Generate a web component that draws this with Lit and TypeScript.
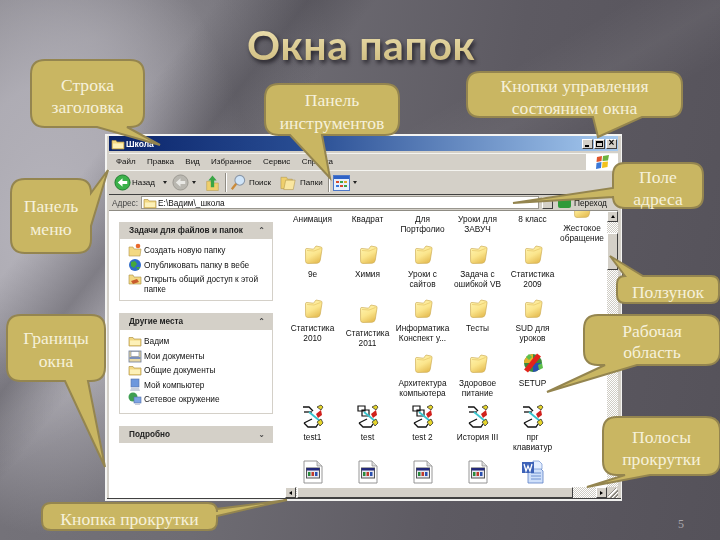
import { LitElement, html, css, svg, nothing } from "lit";
import { customElement } from "lit/decorators.js";

type Tail = { side: "top" | "bottom" | "left" | "right"; a: number; b: number; tx: number; ty: number };
type Callout = { x: number; y: number; w: number; h: number; r: number; lines: string[]; tail: Tail; lh: number };

const callouts: Callout[] = [
  { x: 31, y: 60, w: 113, h: 67, r: 14, lh: 22, lines: ["Строка", "заголовка"], tail: { side: "bottom", a: 97, b: 127, tx: 160, ty: 145 } },
  { x: 265, y: 84, w: 134, h: 51, r: 14, lh: 23, lines: ["Панель", "инструментов"], tail: { side: "bottom", a: 290, b: 322, tx: 330, ty: 178 } },
  { x: 467, y: 72, w: 215, h: 45, r: 13, lh: 22, lines: ["Кнопки управления", "состоянием окна"], tail: { side: "bottom", a: 593, b: 642, tx: 598, ty: 137 } },
  { x: 613, y: 163, w: 90, h: 45, r: 12, lh: 22, lines: ["Поле", "адреса"], tail: { side: "left", a: 188, b: 197, tx: 513, ty: 203 } },
  { x: 617, y: 276, w: 102, h: 27, r: 8, lh: 22, lines: ["Ползунок"], tail: { side: "top", a: 625, b: 643, tx: 610, ty: 256 } },
  { x: 584, y: 315, w: 136, h: 50, r: 14, lh: 21, lines: ["Рабочая", "область"], tail: { side: "bottom", a: 605, b: 637, tx: 547, ty: 392 } },
  { x: 603, y: 417, w: 117, h: 58, r: 14, lh: 22, lines: ["Полосы", "прокрутки"], tail: { side: "bottom", a: 625, b: 650, tx: 587, ty: 487 } },
  { x: 11, y: 179, w: 80, h: 74, r: 14, lh: 23, lines: ["Панель", "меню"], tail: { side: "right", a: 193, b: 226, tx: 108, ty: 170 } },
  { x: 7, y: 315, w: 98, h: 66, r: 14, lh: 23, lines: ["Границы", "окна"], tail: { side: "bottom", a: 65, b: 88, tx: 105, ty: 467 } },
  { x: 42, y: 503, w: 175, h: 27, r: 9, lh: 22, lines: ["Кнопка прокрутки"], tail: { side: "right", a: 509, b: 516, tx: 287, ty: 500 } },
];

function calloutPath(c: Callout, ox: number, oy: number) {
  const l = c.x - ox, t = c.y - oy, r = l + c.w, b = t + c.h, q = c.r;
  const tx = c.tail.tx - ox, ty = c.tail.ty - oy;
  const A = c.tail.a, B = c.tail.b;
  let d = `M${l + q} ${t}`;
  if (c.tail.side === "top") d += `L${A - ox} ${t}L${tx} ${ty}L${B - ox} ${t}`;
  d += `L${r - q} ${t}Q${r} ${t} ${r} ${t + q}`;
  if (c.tail.side === "right") d += `L${r} ${A - oy}L${tx} ${ty}L${r} ${B - oy}`;
  d += `L${r} ${b - q}Q${r} ${b} ${r - q} ${b}`;
  if (c.tail.side === "bottom") d += `L${B - ox} ${b}L${tx} ${ty}L${A - ox} ${b}`;
  d += `L${l + q} ${b}Q${l} ${b} ${l} ${b - q}`;
  if (c.tail.side === "left") d += `L${l} ${B - oy}L${tx} ${ty}L${l} ${A - oy}`;
  d += `L${l} ${t + q}Q${l} ${t} ${l + q} ${t}Z`;
  return d;
}

const folder = (w = 20, h = 20) => html`<svg width=${w} height=${h} viewBox="0 0 20 20">
  <defs><linearGradient id="fg" x1="0" y1="0" x2=".5" y2="1"><stop offset="0" stop-color="#fff6b4"/><stop offset=".6" stop-color="#fbe58c"/><stop offset="1" stop-color="#e8c25a"/></linearGradient></defs>
  <path d="M2.500 5.500Q2.500 4.500 4 4.500L10.500 5.200 13 2 18 3Q19.300 3.300 19 5L17.300 16Q17 19 14 19.300L5 19.500Q2.800 19.500 2.600 17.500Z" fill="url(#fg)" stroke="#cfae56" stroke-width=".7"/>
  <path d="M4 6.500 11 7 17.500 4.500" fill="none" stroke="#e6c566" stroke-width=".7"/>
</svg>`;

const smallFolder = () => html`<svg width="14" height="14" viewBox="0 0 14 14">
  <path d="M1 3.500 5 3.500 6 5 13 5 13 12 1 12Z" fill="#f3d983" stroke="#b2964a" stroke-width=".7"/>
  <path d="M2 6.500 12 6.500 12 11 2 11Z" fill="#fdf1b8"/>
</svg>`;

const appIcon = (boxes = false) => html`<svg width="24" height="26" viewBox="0 0 24 26">
  ${boxes
    ? svg`<path d="M2 2H9V7H2ZM6 6H13V12H6Z" fill="none" stroke="#111" stroke-width="1.200"/>`
    : svg`<path d="M2 3H8L12 7" fill="none" stroke="#111" stroke-width="1.300"/><path d="M3 8H11" stroke="#111" stroke-width="1.300"/>`}
  <path d="M8 8 19 17" stroke="#39c6cf" stroke-width="1.800"/>
  <path d="M3 19 11 15M3 19 7 23 15 23 17 20" fill="none" stroke="#111" stroke-width="1.300"/>
  <path d="M16 3 20 1 22 3 20 6Z" fill="#e6d52a" stroke="#222" stroke-width=".7"/>
  <path d="M15 10 20 6 21 11 17 14Z" fill="#d0201c"/>
  <path d="M16 18 20 15 22 19 19 22Z" fill="#e6d52a" stroke="#222" stroke-width=".7"/>
</svg>`;

const htmlIcon = () => html`<svg width="20" height="24" viewBox="0 0 20 24">
  <path d="M1 1H14L19 6V23H1Z" fill="#fff" stroke="#8a8a8a" stroke-width=".9"/>
  <path d="M14 1V6H19" fill="#dcdcdc" stroke="#8a8a8a" stroke-width=".7"/>
  <rect x="3.500" y="8" width="13" height="10" fill="#e8e8f0" stroke="#555"/>
  <rect x="3.500" y="8" width="13" height="2.500" fill="#23297a"/>
  <rect x="5" y="12" width="2.500" height="4" fill="#2a8a3a"/>
  <rect x="8.500" y="12" width="2.500" height="4" fill="#c0392b"/>
  <rect x="12" y="12" width="2.500" height="4" fill="#2a50b0"/>
</svg>`;

const wordIcon = () => html`<svg width="24" height="24" viewBox="0 0 24 24">
  <path d="M7 7H18L22 11V23H7Z" fill="#cfe0fa" stroke="#5a7fc4" stroke-width=".8"/>
  <path d="M10 13H20M10 16H20M10 19H20" stroke="#6f90d0"/>
  <path d="M12 1H18L21 4V9H12Z" fill="#e4eeff" stroke="#6f90d0" stroke-width=".7"/>
  <rect x="1" y="2" width="12" height="11" fill="#3d62b8"/>
  <path d="M3 4 5 11 7 6 9 11 11 4" fill="none" stroke="#fff" stroke-width="1.300"/>
</svg>`;

const setupIcon = () => html`<svg width="24" height="22" viewBox="0 0 24 22">
  <circle cx="12" cy="11" r="9" fill="#3c8a3a"/>
  <path d="M3 11A9 9 0 0 1 12 2L12 11Z" fill="#e2b22a"/>
  <path d="M21 11A9 9 0 0 1 12 20L12 11Z" fill="#2a4fb0"/>
  <path d="M5 5 8 2 11 5 8 8ZM17 13 21 11 22 16 18 18Z" fill="#5ec04c"/>
  <path d="M5 19 18 3" stroke="#e3231b" stroke-width="5"/>
</svg>`;

const arrowIcon = (fill: string, stroke: string, arrow: string) => html`<svg width="17" height="17" viewBox="0 0 18 18">
  <circle cx="9" cy="9" r="8" fill=${fill} stroke=${stroke}/>
  <path d="M4 9 9 4.500V7.500H14V10.500H9V13.500Z" fill=${arrow}/>
</svg>`;

const xpFlag = () => html`<svg width="16" height="16" viewBox="0 0 16 16">
  <path d="M2 3 7 2 6.500 7 1.500 8Z" fill="#e0542a"/>
  <path d="M8 2 14 1 13 6.500 7.500 7Z" fill="#6cb33f"/>
  <path d="M1.500 9 6.500 8 6 14 1 15Z" fill="#3a78d8"/>
  <path d="M7.500 8 13 7.500 12.500 13 7 14Z" fill="#f2c21d"/>
</svg>`;

const taskIcon = (k: string) => {
  if (k === "new") return html`<svg width="14" height="14" viewBox="0 0 14 14"><path d="M1 4 5 4 6 6 13 6 12 13 1 13Z" fill="#f3d983" stroke="#b2964a" stroke-width=".6"/><circle cx="10" cy="3" r="2.300" fill="#e8692c"/></svg>`;
  if (k === "web") return html`<svg width="14" height="14" viewBox="0 0 14 14"><circle cx="7" cy="7" r="6" fill="#2f6bc9"/><path d="M3 4 7 3 9 6 6 10 3 8ZM8 9H12L10 12Z" fill="#45a83a"/></svg>`;
  if (k === "share") return html`<svg width="14" height="14" viewBox="0 0 14 14"><path d="M1 3 5 3 6 5 13 5 13 12 1 12Z" fill="#f3d983" stroke="#a98f44" stroke-width=".6"/><path d="M3 9 9 7 11 10 5 12Z" fill="#c85a2c"/></svg>`;
  if (k === "docs") return html`<svg width="14" height="14" viewBox="0 0 14 14"><rect x="1" y="2" width="12" height="11" fill="#e9d9a4" stroke="#6d7c9a" stroke-width=".8"/><rect x="3" y="2.500" width="8" height="5" fill="#fff" stroke="#6d7c9a" stroke-width=".6"/><rect x="1.500" y="8" width="11" height="2" fill="#7a8fbd"/></svg>`;
  if (k === "pc") return html`<svg width="14" height="14" viewBox="0 0 14 14"><rect x="3" y="1" width="8" height="8" fill="#6d97dd" stroke="#5670a8" stroke-width=".6"/><path d="M3 10H11L12 13H2Z" fill="#c9cfdc"/></svg>`;
  if (k === "net") return html`<svg width="14" height="14" viewBox="0 0 14 14"><circle cx="5" cy="5" r="4.500" fill="#3f9f52"/><rect x="6" y="5" width="7" height="6" fill="#7da4e4" stroke="#5670a8" stroke-width=".6"/><rect x="7" y="11" width="5" height="2" fill="#c9cfdc"/></svg>`;
  return smallFolder();
};

type Item = { icon?: "folder" | "app" | "appb" | "html" | "word" | "setup"; label?: string[]; cls?: string };
const items: Item[] = [
  { icon: "folder", label: ["Анимация"] }, { icon: "folder", label: ["Квадрат"] }, { icon: "folder", label: ["Для", "Портфолио"] },
  { icon: "folder", label: ["Уроки для", "ЗАВУЧ"] }, { icon: "folder", label: ["8 класс"] }, { icon: "folder", label: ["Жестокое", "обращение"], cls: "low" },
  { icon: "folder", label: ["9е"] }, { icon: "folder", label: ["Химия"] }, { icon: "folder", label: ["Уроки с", "сайтов"] },
  { icon: "folder", label: ["Задача с", "ошибкой VB"] }, { icon: "folder", label: ["Статистика", "2009"] }, {},
  { icon: "folder", label: ["Статистика", "2010"] }, { icon: "folder", label: ["Статистика", "2011"], cls: "shift" }, { icon: "folder", label: ["Информатика", "Конспект у..."] },
  { icon: "folder", label: ["Тесты"] }, { icon: "folder", label: ["SUD для", "уроков"] }, {},
  {}, {}, { icon: "folder", label: ["Архитектура", "компьютера"] },
  { icon: "folder", label: ["Здоровое", "питание"] }, { icon: "setup", label: ["SETUP"] }, {},
  { icon: "app", label: ["test1"] }, { icon: "appb", label: ["test"] }, { icon: "appb", label: ["test 2"] },
  { icon: "app", label: ["История III"] }, { icon: "app", label: ["прг", "клавиатур"] }, {},
  { icon: "html" }, { icon: "html" }, { icon: "html" }, { icon: "html" }, { icon: "word" }, {},
];

const renderIcon = (k?: string) => {
  switch (k) {
    case "folder": return folder();
    case "app": return appIcon();
    case "appb": return appIcon(true);
    case "html": return htmlIcon();
    case "word": return wordIcon();
    case "setup": return setupIcon();
  }
  return nothing;
};

const panels = [
  { title: "Задачи для файлов и папок", up: true, rows: [["new", "Создать новую папку"], ["web", "Опубликовать папку в вебе"], ["share", "Открыть общий доступ к этой папке"]], h: 62 },
  { title: "Другие места", up: true, rows: [["folder", "Вадим"], ["docs", "Мои документы"], ["folder", "Общие документы"], ["pc", "Мой компьютер"], ["net", "Сетевое окружение"]], h: 84 },
  { title: "Подробно", up: false, rows: [], h: 0 },
];

@customElement("app-root")
export class AppRoot extends LitElement {
  static styles = css`
    :host { display: block; width: 720px; height: 540px; overflow: hidden; }
    .slide {
      position: relative; width: 720px; height: 540px; display: flex; flex-direction: column;
      font-family: "Liberation Serif", serif;
      background:
        linear-gradient(128deg, rgba(60,58,66,.0) 0 19%, rgba(60,58,66,.42) 27%, rgba(60,58,66,0) 33%),
        linear-gradient(150deg, rgba(255,255,255,0) 38%, rgba(255,255,255,.06) 44%, rgba(255,255,255,0) 50%),
        radial-gradient(ellipse 205px 310px at 50px 225px, #b6b4bc 0, rgba(182,180,188,.85) 45%, rgba(182,180,188,0) 100%),
        radial-gradient(ellipse 240px 130px at 90px 40px, rgba(150,148,155,.8) 0, rgba(150,148,155,0) 100%),
        linear-gradient(100deg, #77757c 0, #6e6c73 35%, #5d5a62 65%, #55525a 100%);
    }
    .head { height: 134px; flex: none; }
    h1 {
      margin: 0 0 0 247px; padding-top: 22px; width: fit-content;
      font: 700 41px/46px Lato, "Open Sans", sans-serif; letter-spacing: .6px;
      background: linear-gradient(180deg, #f7f1cf 0, #e9dcaa 45%, #cdb97a 100%);
      -webkit-background-clip: text; background-clip: text; color: transparent;
      filter: drop-shadow(2px 3px 2px rgba(20,18,24,.75));
    }
    .win {
      flex: none; margin-left: 105px; width: 517px; height: 367px; box-sizing: border-box;
      border: 2px solid #f4f4f2; border-right-width: 1px; border-bottom: 2px solid #f0f0ee;
      outline: 0; background: #d4d0c8; padding: 0 3px 1px 2px; display: flex; flex-direction: column;
      font: 8.300px/10px "Liberation Sans", sans-serif; color: #111;
      box-shadow: inset 0 -1px 0 #404040;
      filter: blur(.42px);
    }
    .title {
      flex: none; height: 15px; display: flex; align-items: center; gap: 1px; padding: 0 1px 0 2px;
      background: linear-gradient(90deg, #0a246a 0, #2a4f95 40%, #a6caf0 100%);
      color: #fff; font-weight: 700; font-size: 8.500px;
    }
    .title .sp { flex: 1; }
    .wb { display: flex; gap: 1px; }
    .wb span {
      width: 11px; height: 10px; background: #d4d0c8; box-sizing: border-box; position: relative;
      border: 1px solid; border-color: #fff #404040 #404040 #fff; display: block;
    }
    .wb .min::after { content: ""; position: absolute; left: 2px; bottom: 1px; width: 4px; height: 2px; background: #000; }
    .wb .max::after { content: ""; position: absolute; inset: 1px 1px; border: 1px solid #000; border-top-width: 2px; }
    .wb .cls::after { content: "×"; position: absolute; inset: -2px 0 0 0; text-align: center; font: 700 10px/10px "Liberation Sans"; color: #000; }
    .menu {
      flex: none; height: 17px; margin-top: 2px; display: flex; align-items: stretch; box-sizing: border-box;
      border-top: 1px solid #f4f4f0;
    }
    .menu .items { flex: 1; display: flex; align-items: center; gap: 11.300px; padding-left: 7px; border-right: 1px solid #fff; font-size: 8px; }
    .menu .flag { width: 31px; background: #fff; display: flex; align-items: center; justify-content: center; }
    .tools {
      flex: none; height: 25px; display: flex; align-items: center; padding-left: 5px; box-sizing: border-box;
      border-top: 1px solid #f4f4f0; border-bottom: 1px solid #404040; font-size: 8px;
    }
    .t { display: flex; align-items: center; }
    .t.back { gap: 1px; }
    .t.back .caret { margin-left: 7px; }
    .t.fwd { margin-left: 5px; gap: 3px; }
    .t.up { margin-left: 9px; }
    .t.find { gap: 3px; }
    .t.dirs { margin-left: 9px; gap: 3px; }
    .t.views { gap: 3px; }
    .sep { width: 1px; height: 19px; background: #8f8c84; box-shadow: 1px 0 0 #fff; margin: 0 4px 0 5px; }
    .caret { width: 0; height: 0; border: 2.500px solid transparent; border-top: 3px solid #222; border-bottom: 0; display: inline-block; }
    .addr { flex: none; height: 15px; display: flex; align-items: center; gap: 3px; padding: 1px 0 1px 3px; box-sizing: border-box; font-size: 8.300px; }
    .addr .lab { color: #444; }
    .addr .field { flex: 1; height: 13px; background: #fff; display: flex; align-items: center; gap: 1px; padding-left: 1px; border: 1px solid #9a978f; box-sizing: border-box; }
    .addr .drop { height: 12px; }
    .addr .go { width: 13px; height: 11px; background: #2f9a3a; border-radius: 2px; margin-left: 2px; }
    .addr .gotxt { width: 44px; }
    .work { flex: 1; min-height: 0; display: flex; background: #fff; border-top: 1px solid #8f8c84; }
    .pane { flex: none; width: 176px; box-sizing: border-box; padding: 11px 12px 0 10px; display: flex; flex-direction: column; gap: 12px; }
    .panel { display: flex; flex-direction: column; }
    .panel .ph {
      height: 17px; background: #d4d0c8; display: flex; align-items: center; justify-content: space-between;
      padding: 0 8px 0 10px; font-weight: 700; font-size: 8.200px; color: #222;
    }
    .chev { font: 700 8px/8px "DejaVu Sans", sans-serif; color: #444; }
    .panel .pb { border: 1px solid #d4d0c8; border-top: 0; padding: 4px 4px 0 8px; display: flex; flex-direction: column; gap: .5px; box-sizing: border-box; }
    .row { display: flex; gap: 1px; align-items: flex-start; min-height: 14px; }
    .row svg { flex: none; margin-right: 1px; }
    .row span { padding-top: 2px; width: 125px; }
    .right { flex: 1; min-width: 0; display: flex; flex-direction: column; }
    .mid { flex: 1; min-height: 0; display: flex; }
    .viewport { flex: 1; min-width: 0; overflow: hidden; }
    .grid {
      margin-top: -22px; display: grid; grid-template-columns: repeat(5, 55px) 44px; grid-auto-rows: 54.600px; text-align: center;
    }
    .cell { display: flex; flex-direction: column; align-items: center; }
    .cell.shift { padding-top: 5px; }
    .cell.low { padding-top: 9px; }
    .ic { height: 20px; display: flex; align-items: center; justify-content: center; margin-bottom: 5px; }
    .lbl { white-space: nowrap; font-size: 8.300px; }
    .sb { background: repeating-conic-gradient(#cfccc4 0 25%, #fff 0 50%) 0 0 / 2px 2px; display: flex; flex: none; }
    .sb.v { width: 11px; flex-direction: column; }
    .sb.h { height: 11px; }
    .btn {
      flex: none; width: 11px; height: 11px; box-sizing: border-box; background: #d4d0c8; border: 1px solid; border-color: #fff #404040 #404040 #fff;
      display: flex; align-items: center; justify-content: center;
    }
    .tri-u { border: 2.500px solid transparent; border-bottom: 3px solid #000; border-top: 0; }
    .tri-l { border: 2.500px solid transparent; border-right: 3px solid #000; border-left: 0; }
    .tri-r { border: 2.500px solid transparent; border-left: 3px solid #000; border-right: 0; }
    .thumb { box-sizing: border-box; background: #d4d0c8; border: 1px solid; border-color: #fff #404040 #404040 #fff; }
    .sb.v .thumb { height: 37px; margin-top: 11px; }
    .sb.h .thumb { width: 276px; margin-left: 1px; }
    .sb.h .sp { flex: 1; }
    .grip { flex: none; width: 11px; height: 11px; background: #d4d0c8; position: relative; overflow: hidden; }
    .grip::after { content: ""; position: absolute; right: -4px; bottom: -4px; width: 12px; height: 12px; transform: rotate(45deg);
      background: repeating-linear-gradient(90deg, #8a877f 0 1px, #fff 1px 2px, #d4d0c8 2px 3px); }
    .foot { flex: 1; display: flex; justify-content: flex-end; align-items: flex-end; padding: 0 36px 9px 0; color: #a9a7ad; font-size: 12px; line-height: 14px; }
    .call { position: absolute; box-sizing: border-box; padding-top: 4px; display: flex; flex-direction: column; align-items: center; justify-content: center; color: #f6f1da; font-size: 17.600px; text-align: center; white-space: nowrap; }
    .shape { position: absolute; left: 0; top: 0; overflow: visible; }
    .call b { position: relative; font-weight: 400; display: block; }
    .path { fill: #c9b662; stroke: #94854f; stroke-width: 2; }
  `;

  render() {
    return html`<div class="slide">
      <div class="head"><h1>Окна папок</h1></div>

      <div class="win">
        <div class="title">
          ${smallFolder()}<span>Школа</span><span class="sp"></span>
          <div class="wb"><span class="min"></span><span class="max"></span><span class="cls"></span></div>
        </div>
        <div class="menu">
          <div class="items">${["Файл", "Правка", "Вид", "Избранное", "Сервис", "Справка"].map((m) => html`<span>${m}</span>`)}</div>
          <div class="flag">${xpFlag()}</div>
        </div>
        <div class="tools">
          <div class="t back">${arrowIcon("#3bb14a", "#1d7a2c", "#fff")}<span>Назад</span><i class="caret"></i></div>
          <div class="t fwd">${arrowIcon("#b9b7b0", "#9a9890", "#e8e8e4")}<i class="caret"></i></div>
          <div class="t up">
            <svg width="15" height="20" viewBox="0 0 18 20"><path d="M2 8H7L8 10H16V19H2Z" fill="#efcf6c" stroke="#b2964a" stroke-width=".6"/><path d="M9 1 14 7H11V15H7V7H4Z" fill="#3aa545"/></svg>
          </div>
          <div class="sep"></div>
          <div class="t find">
            <svg width="16" height="19" viewBox="0 0 18 19"><circle cx="11" cy="7" r="5.500" fill="#cfe4f8" stroke="#8a97a8" stroke-width="1.200"/><path d="M7 11 2 17" stroke="#c98a3a" stroke-width="2.600"/></svg>
            <span>Поиск</span>
          </div>
          <div class="t dirs">
            <svg width="17" height="17" viewBox="0 0 18 17"><path d="M1 3H7L8 5H13V15H1Z" fill="#efcf6c" stroke="#b2964a" stroke-width=".6"/><path d="M6 6H16L14 16H4Z" fill="#f9e6a0" stroke="#b2964a" stroke-width=".6"/></svg>
            <span>Папки</span>
          </div>
          <div class="sep"></div>
          <div class="t views">
            <svg width="17" height="16" viewBox="0 0 17 16"><rect x=".5" y=".5" width="16" height="15" fill="#e8f0fc" stroke="#4d78c9"/><rect x="1" y="1" width="15" height="3" fill="#2f63c6"/><path d="M3 6H6V8H3Z" fill="#d84c2c"/><path d="M7 6H10V8H7Z" fill="#3aa545"/><path d="M11 6H14V8H11Z" fill="#e0a82a"/><path d="M3 10H6V12H3Z" fill="#3a78d8"/><path d="M7 10H10V12H7Z" fill="#d84c2c"/><path d="M11 10H14V12H11Z" fill="#3aa545"/></svg>
            <i class="caret"></i>
          </div>
        </div>
        <div class="addr">
          <span class="lab">Адрес:</span>
          <div class="field">${smallFolder()}<span>E:\\Вадим\\_школа</span></div>
          <span class="btn drop"></span>
          <span class="go"></span><span class="gotxt">Переход</span>
        </div>
        <div class="work">
          <div class="pane">
            ${panels.map((p) => html`<div class="panel">
              <div class="ph"><span>${p.title}</span><span class="chev">${p.up ? "⌃" : "⌄"}</span></div>
              ${p.rows.length
                ? html`<div class="pb" style="height:${p.h}px">
                    ${p.rows.map((r) => html`<div class="row">${taskIcon(r[0])}<span>${r[1]}</span></div>`)}
                  </div>`
                : nothing}
            </div>`)}
          </div>
          <div class="right">
            <div class="mid">
              <div class="viewport">
                <div class="grid">
                  ${items.map((it) => html`<div class="cell ${it.cls ?? ""}">
                    <div class="ic">${renderIcon(it.icon)}</div>
                    ${(it.label ?? []).map((l) => html`<div class="lbl">${l}</div>`)}
                  </div>`)}
                </div>
              </div>
              <div class="sb v">
                <div class="btn"><i class="tri-u"></i></div>
                <div class="thumb"></div>
              </div>
            </div>
            <div class="sb h">
              <div class="btn"><i class="tri-l"></i></div>
              <div class="thumb"></div>
              <span class="sp"></span>
              <div class="btn"><i class="tri-r"></i></div>
              <div class="grip"></div>
            </div>
          </div>
        </div>
      </div>

      <div class="foot">5</div>

      ${callouts.map((c) => html`<div class="call" style="left:${c.x}px;top:${c.y}px;width:${c.w}px;height:${c.h}px;line-height:${c.lh}px">
        <svg class="shape" width=${c.w} height=${c.h}><path class="path" d=${calloutPath(c, c.x, c.y)}></path></svg>
        ${c.lines.map((l) => html`<b>${l}</b>`)}
      </div>`)}
    </div>`;
  }
}
